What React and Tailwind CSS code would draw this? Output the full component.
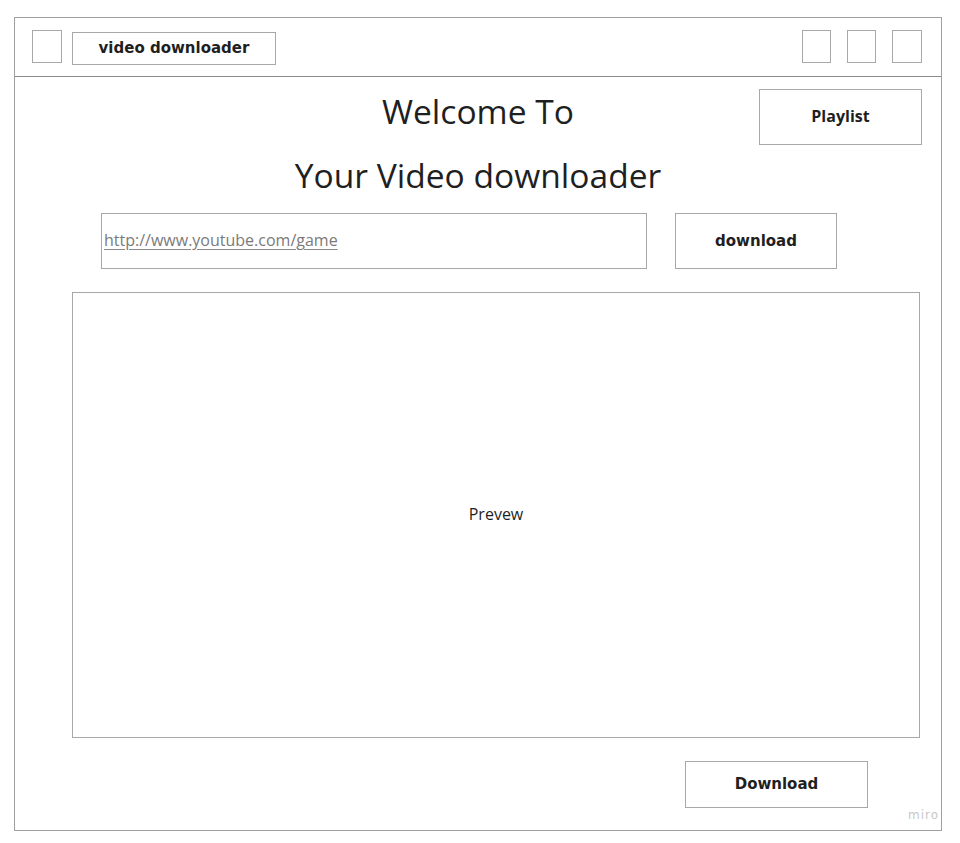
export default function App() {
  const box = "border border-[#a8a8a8] bg-white";
  const dejavu = { fontFamily: "'DejaVu Sans', sans-serif" };
  return (
    <div className="min-h-screen bg-white pl-[14px] pt-[17px] text-[#1f1f1f] [font-family:'Open_Sans',sans-serif]">
      <div className="relative flex h-[814px] w-[928px] flex-col border border-[#a0a0a0]">
        {/* header */}
        <div className="flex h-[59px] items-start border-b border-[#8a8a8a] pl-[17px] pr-[19px] pt-[12px]">
          <div className={`h-[33px] w-[30px] ${box}`} />
          <div
            className={`ml-[10px] mt-[2px] flex h-[33px] w-[204px] items-center justify-center text-[15px] font-bold ${box}`}
            style={dejavu}
          >
            video downloader
          </div>
          <div className="ml-auto flex gap-[16px]">
            <div className={`h-[33px] w-[29px] ${box}`} />
            <div className={`h-[33px] w-[29px] ${box}`} />
            <div className={`h-[33px] w-[30px] ${box}`} />
          </div>
        </div>

        {/* title row */}
        <div className="grid grid-cols-[1fr_auto_1fr] pt-[12px]">
          <div />
          <div className="flex flex-col items-center text-[33.6px]">
            <h1 className="leading-[44px]">Welcome To</h1>
            <h1 className="mt-[20px] leading-[44px]">Your Video downloader</h1>
          </div>
          <div className="flex justify-end pr-[19px]">
            <button className={`h-[56px] w-[163px] pb-[3px] text-[16px] font-bold ${box}`}>Playlist</button>
          </div>
        </div>

        {/* url row */}
        <div className="ml-[86px] mt-[16px] flex gap-[28px]">
          <div className={`flex h-[56px] w-[546px] items-center pb-[2px] pl-[2px] ${box}`}>
            <span className="text-[16px] text-[#7a7a7a] underline decoration-[#8a8a8a] underline-offset-[3px]">
              http://www.youtube.com/game
            </span>
          </div>
          <button className={`h-[56px] w-[162px] text-[15px] font-bold ${box}`} style={dejavu}>
            download
          </button>
        </div>

        {/* preview */}
        <div className={`ml-[57px] mt-[23px] flex h-[446px] w-[848px] items-center justify-center pb-[3px] text-[16px] ${box}`}>
          Prevew
        </div>

        {/* bottom */}
        <div className="ml-[670px] mt-[23px]">
          <button className={`h-[47px] w-[183px] text-[15px] font-bold ${box}`} style={dejavu}>
            Download
          </button>
        </div>

        <span
          className="absolute bottom-[6px] right-[2px] text-[12px] tracking-[1px] text-[#c8c8c8]"
          style={dejavu}
        >
          miro
        </span>
      </div>
    </div>
  );
}
